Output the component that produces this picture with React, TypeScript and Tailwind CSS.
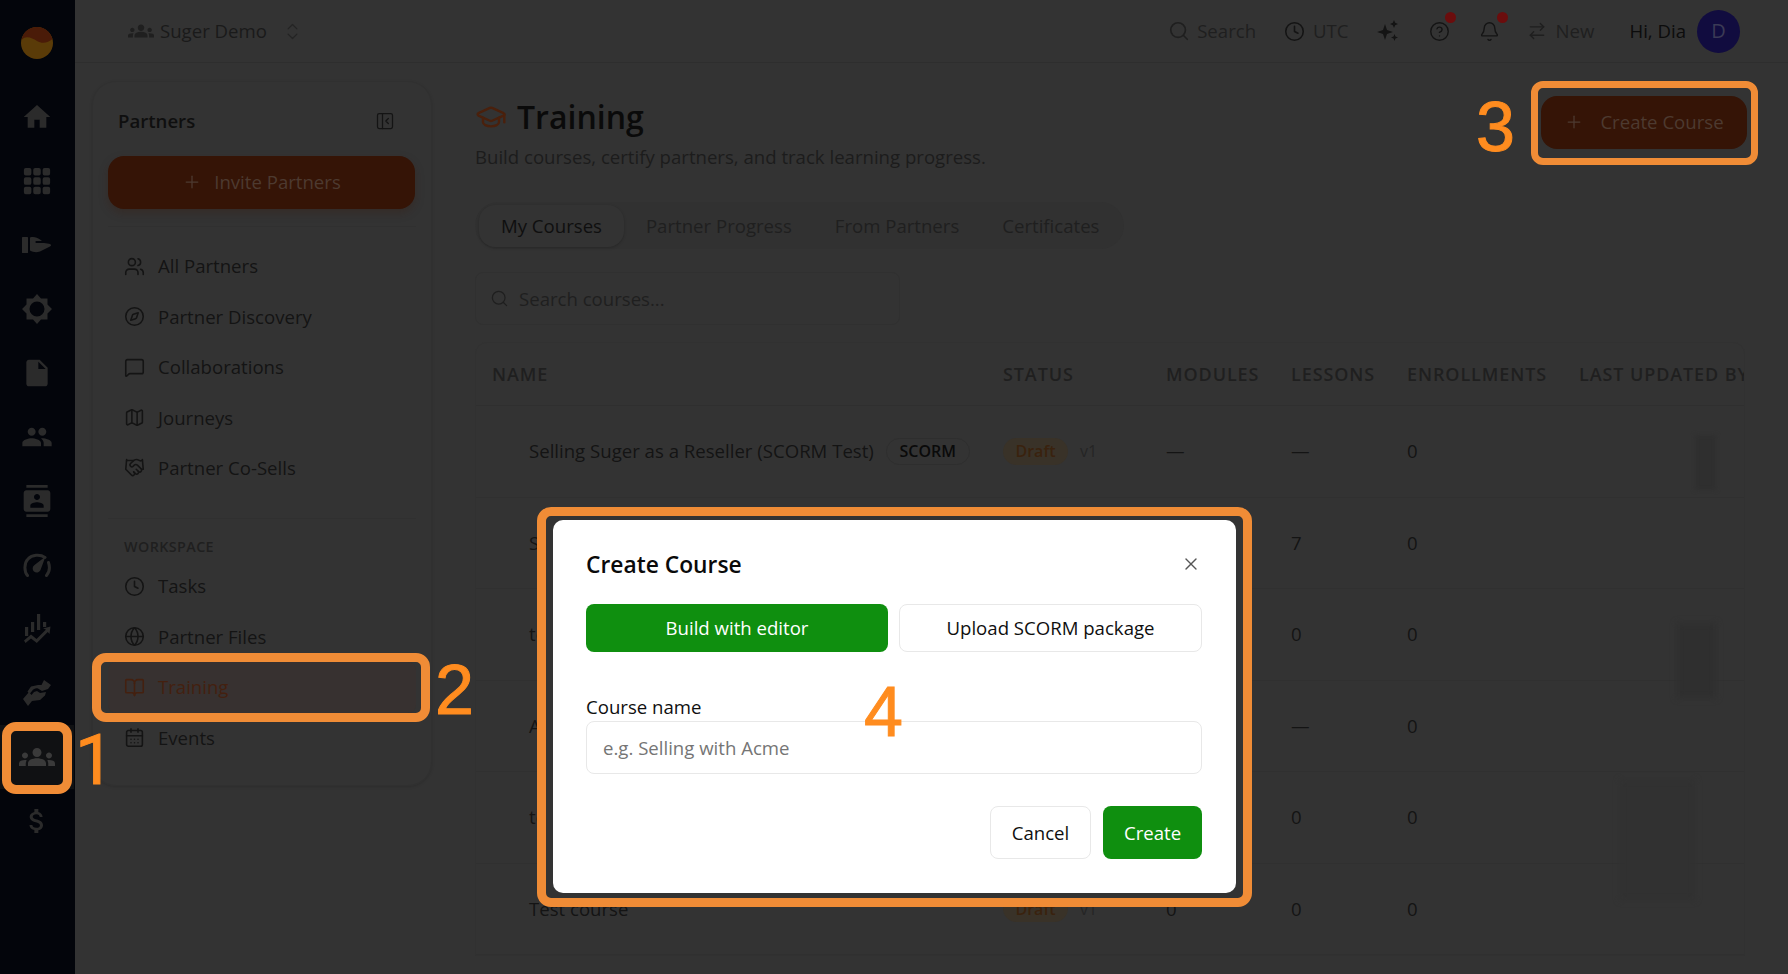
import React from "react";
import {
  Users, Compass, MessageSquare, Map as MapIcon, Handshake, Clock, Globe, BookOpen, CalendarDays,
  PanelLeftClose, GraduationCap, Search, CircleHelp, Bell, ArrowRightLeft, ChevronsUpDown, Plus, X,
} from "lucide-react";
import { MdHome, MdInsertDriveFile, MdPeople, MdContacts, MdGroups, MdAttachMoney } from "react-icons/md";
import { BsGrid3X3GapFill } from "react-icons/bs";

const HandIcon = () => (
  <svg width="30" height="18" viewBox="0 0 30 18" fill="currentColor">
    <rect x="0" y="1" width="6" height="16" rx="0.5" />
    <path d="M8 1.5C12 0.5 15 1.5 18 3.5L20 5H14.5C13 5 13 7 14.5 7H22L27 7.8C29.5 8.4 29.8 10 27.5 10.7L18 15.5C14 17 11 16 8 14.5Z" />
  </svg>
);

const GearIcon = () => (
  <svg width="30" height="30" viewBox="0 0 30 30" fill="currentColor">
    <path fillRule="evenodd" d="M15 0L19 4.5 25.5 4.5 25.5 10.5 30 15 25.5 19.5 25.5 25.5 19 25.5 15 30 11 25.5 4.5 25.5 4.5 19.5 0 15 4.5 10.5 4.5 4.5 11 4.5ZM15 7.5A7.5 7.5 0 1 0 15 22.5 7.5 7.5 0 1 0 15 7.5Z" />
  </svg>
);

const GaugeIcon = () => (
  <svg width="28" height="24" viewBox="0 0 28 24" fill="none">
    <path d="M4.5 22.5C1 18.5 1 10 5 6 9 1.8 17 1 22 4.5" stroke="currentColor" strokeWidth="3" strokeLinecap="round" />
    <path d="M23.5 22.5C26.5 19 27 14 25.5 9.5" stroke="currentColor" strokeWidth="3" strokeLinecap="round" />
    <path d="M22.5 3.5L17.5 17C16.5 19.5 13 20.5 11 18.5 9 16.5 9.5 13.5 11.5 12Z" fill="currentColor" />
  </svg>
);

const ChartIcon = () => (
  <svg width="28" height="30" viewBox="0 0 28 30" fill="currentColor">
    <rect x="2" y="13" width="3.2" height="9" />
    <rect x="8" y="8" width="3.2" height="10" />
    <rect x="14" y="0" width="3.2" height="16" />
    <rect x="20" y="8" width="3.2" height="5" />
    <path d="M1 26.5L8 20.5 13.5 25 23 15.5 20 14.5 27.5 12.5 26.5 20 24.8 18 13.8 29 8 24.5 2.5 29Z" />
  </svg>
);

const ShakeIcon = () => (
  <svg width="28" height="26" viewBox="0 0 28 26" fill="currentColor">
    <path d="M21 0L28 5 25 9 19 11 15 8.5C12.5 8 10.5 9 9 11L6.5 14 4.5 11.5 8 6.5 15 5 18.5 5Z" />
    <path d="M0 19L6 12 8.5 15 11 12 14 11 17 13 23 12 22 15.5 17 20 9 21 5 26Z" />
  </svg>
);

const SparkIcon = () => (
  <svg width="24" height="24" viewBox="0 0 24 24" fill="currentColor">
    <path d="M9 5L11 11 17 13 11 15 9 21 7 15 1 13 7 11Z" />
    <path d="M18 1L19.2 3.8 22 5 19.2 6.2 18 9 16.8 6.2 14 5 16.8 3.8Z" />
    <path d="M18.5 15L19.5 17.5 22 18.5 19.5 19.5 18.5 22 17.5 19.5 15 18.5 17.5 17.5Z" />
  </svg>
);

const railIcons: { I: any; s?: number }[] = [
  { I: MdHome, s: 32 },
  { I: BsGrid3X3GapFill, s: 30 },
  { I: HandIcon },
  { I: GearIcon },
  { I: MdInsertDriveFile, s: 32 },
  { I: MdPeople, s: 32 },
  { I: MdContacts, s: 32 },
  { I: GaugeIcon },
  { I: ChartIcon },
  { I: ShakeIcon },
  { I: MdGroups, s: 36 },
  { I: MdAttachMoney, s: 32 },
];

const mainNav = [
  { I: Users, t: "All Partners" },
  { I: Compass, t: "Partner Discovery" },
  { I: MessageSquare, t: "Collaborations" },
  { I: MapIcon, t: "Journeys" },
  { I: Handshake, t: "Partner Co-Sells" },
];
const workNav = [
  { I: Clock, t: "Tasks" },
  { I: Globe, t: "Partner Files" },
  { I: BookOpen, t: "Training", active: true },
  { I: CalendarDays, t: "Events" },
];

const rows = [
  { n: "Selling Suger as a Reseller (SCORM Test)", scorm: true, m: "—", l: "—", e: "0" },
  { n: "Selling Suger as a Reseller", m: "3", l: "7", e: "0" },
  { n: "test course", m: "0", l: "0", e: "0" },
  { n: "Aevo course", m: "—", l: "—", e: "0" },
  { n: "test", m: "0", l: "0", e: "0" },
  { n: "Test course", m: "0", l: "0", e: "0" },
];

const cols = "grid grid-cols-[511px_163px_125px_116px_172px_1fr] pl-[16px] items-center";

function NavItem({ I, t, active }: { I: any; t: string; active?: boolean }) {
  return (
    <div className={`h-[50.45px] flex items-center gap-[13px] pl-[16px] rounded-lg ${active ? "bg-[#373130] text-[#44200f]" : "text-[#141414]"}`}>
      <I size={21} strokeWidth={1.8} />
      <span className="text-[18.6px]">{t}</span>
    </div>
  );
}

export default function App() {
  return (
    <div className="relative w-[1788px] h-[974px] overflow-hidden flex bg-[#333333] font-['Open_Sans',sans-serif] text-[#141414]">
      {/* rail */}
      <aside className="w-[75px] shrink-0 bg-[#03050b] flex flex-col items-center pt-[27px] pr-[1px]">
        <svg width="32" height="32" viewBox="0 0 32 32" className="mb-[26px] shrink-0">
          <circle cx="16" cy="16" r="16" fill="#5a3b08" />
          <path d="M0.5 13C5 8 11 11 16 14 21 17 27 16 31.5 12 29 4 23 0 16 0 8 0 2 5 0.5 13Z" fill="#4a1b08" />
        </svg>
        {railIcons.map(({ I, s }, i) => (
          <div key={i} className={`h-[64px] w-full flex items-center justify-center ${i === 10 ? "bg-[#101113] text-[#3a3a3a]" : "text-[#2b2b2b]"}`}>
            {s ? <I size={s} /> : <I />}
          </div>
        ))}
      </aside>

      {/* right side */}
      <div className="flex-1 flex flex-col min-w-0">
        <header className="h-[63px] shrink-0 border-b border-[#2e2e2e] flex items-center pl-[53px] pr-[48px]">
          <MdGroups size={26} className="text-[#1f1f1f]" />
          <span className="ml-[6px] text-[18.6px] text-[#1a1a1a]">Suger Demo</span>
          <ChevronsUpDown size={21} strokeWidth={1.5} className="ml-[15px] text-[#242424]" />
          <div className="ml-auto flex items-center text-[18.6px] text-[#1f1f1f]">
            <Search size={22} strokeWidth={1.8} />
            <span className="ml-[7px]">Search</span>
            <Clock size={21} strokeWidth={1.8} className="ml-[28px] text-[#141414]" />
            <span className="ml-[8px]">UTC</span>
            <div className="ml-[27px] text-[#141414]"><SparkIcon /></div>
            <div className="relative ml-[29px]">
              <CircleHelp size={21} strokeWidth={1.6} className="text-[#141414]" />
              <span className="absolute -top-[9px] -right-[6px] w-[11px] h-[11px] rounded-full bg-[#6b0d0d]" />
            </div>
            <div className="relative ml-[29px]">
              <Bell size={21} strokeWidth={1.6} className="text-[#141414]" />
              <span className="absolute -top-[9px] -right-[8px] w-[11px] h-[11px] rounded-full bg-[#6b0d0d]" />
            </div>
            <ArrowRightLeft size={20} strokeWidth={1.7} className="ml-[27px]" />
            <span className="ml-[9px]">New</span>
            <span className="ml-[35px] text-[#0c0c0c]">Hi, Dia</span>
            <div className="ml-[11px] w-[43px] h-[43px] rounded-full bg-[#110c3f] text-[#3b3a55] flex items-center justify-center text-[20px]">D</div>
          </div>
        </header>

        <div className="flex flex-1 min-h-0">
          {/* partners panel */}
          <section className="ml-[17px] mt-[18px] w-[340px] h-[705px] shrink-0 rounded-[24px] border border-[#303030] px-[15px] shadow-[0_1px_3px_rgba(0,0,0,0.15)]">
            <div className="h-[26px] mt-[26px] flex items-center justify-between pl-[10px] pr-[21px]">
              <span className="text-[18.6px] font-semibold text-[#0f0f0f]">Partners</span>
              <PanelLeftClose size={20} strokeWidth={1.5} className="text-[#141414]" />
            </div>
            <button className="mt-[22px] w-[307px] h-[53px] pb-[2px] rounded-[16px] bg-[#351406] text-[#4d3a30] flex items-center justify-center gap-[12px] text-[18.6px] shadow-[0_4px_10px_rgba(60,20,0,0.25)]">
              <Plus size={20} strokeWidth={1.5} />
              Invite Partners
            </button>
            <div className="mt-[17px] border-t border-[#303030]" />
            <nav className="mt-[14px]">
              {mainNav.map((n) => <NavItem key={n.t} {...n} />)}
            </nav>
            <div className="mt-[25px] border-t border-[#303030]" />
            <div className="mt-[18px] h-[20px] pl-[16px] flex items-center text-[14.3px] font-semibold tracking-[0.03em] text-[#1f1f1f]">WORKSPACE</div>
            <nav className="mt-[4px]">
              {workNav.map((n) => <NavItem key={n.t} {...n} />)}
            </nav>
          </section>

          {/* content */}
          <main className="ml-[43px] w-[1272px] shrink-0">
            <div className="flex justify-between items-start pt-[32px]">
              <div>
                <div className="flex items-center h-[44px]">
                  <GraduationCap size={32} strokeWidth={1.8} className="text-[#4a200c]" />
                  <h1 className="ml-[10px] text-[32px] font-semibold text-[#0a0a0a] leading-[44px]">Training</h1>
                </div>
                <p className="mt-[5px] text-[18.6px] leading-[26px] text-[#1c1c1c]">Build courses, certify partners, and track learning progress.</p>
              </div>
              <button className="mt-[1px] w-[206px] h-[53px] pb-[1px] rounded-[16px] bg-[#351406] text-[#4d3a30] flex items-center justify-center gap-[16px] text-[18.6px]">
                <Plus size={20} strokeWidth={1.5} />
                Create Course
              </button>
            </div>

            <div className="mt-[32px] w-[649px] h-[47px] rounded-full bg-[#313131] flex items-center pl-[4px] text-[18.6px] text-[#1f1f1f]">
              <span className="h-[42px] px-[22px] rounded-[16px] bg-[#333333] shadow-[0_1px_3px_rgba(0,0,0,0.2)] flex items-center text-[#0f0f0f]">My Courses</span>
              <span className="px-[22px]">Partner Progress</span>
              <span className="px-[21px]">From Partners</span>
              <span className="px-[22px]">Certificates</span>
            </div>

            <div className="mt-[23px] w-[425px] h-[53px] rounded-lg border border-[#303030] flex items-center pl-[14px] gap-[10px] text-[18.6px] text-[#1f1f1f]">
              <Search size={19} strokeWidth={1.6} />
              <span>Search courses...</span>
            </div>

            <div className="mt-[17px] w-[1270px] rounded-t-xl border border-[#313131] overflow-hidden whitespace-nowrap">
              <div className={`${cols} h-[63px] border-b border-[#2f2f2f] text-[18px] font-semibold tracking-[0.05em] text-[#1f1f1f]`}>
                <span>NAME</span>
                <span>STATUS</span>
                <span>MODULES</span>
                <span>LESSONS</span>
                <span>ENROLLMENTS</span>
                <span>LAST UPDATED BY</span>
              </div>
              {rows.map((r) => (
                <div key={r.n} className={`${cols} h-[91.5px] border-b border-[#303030] text-[18.6px] text-[#141414]`}>
                  <div className="pl-[37px] flex items-center gap-[12px]">
                    <span>{r.n}</span>
                    {r.scorm && <span className="h-[27px] w-[84px] rounded-full border border-[#2e2e2e] flex items-center justify-center text-[16px] font-semibold text-[#0a0a0a]">SCORM</span>}
                  </div>
                  <div className="flex items-center gap-[12px]">
                    <span className="h-[27px] w-[65px] rounded-full bg-[#393228] text-[#3a220e] flex items-center justify-center text-[16px] font-semibold">Draft</span>
                    <span className="text-[16px] text-[#252525]">v1</span>
                  </div>
                  <span>{r.m}</span>
                  <span>{r.l}</span>
                  <span>{r.e}</span>
                  <span />
                </div>
              ))}
            </div>
          </main>
        </div>
      </div>

      {/* faint blurred redactions over the last column */}
      <div className="absolute left-[1695px] top-[435px] w-[21px] h-[55px] bg-[#2f2f2f] blur-[2px]" />
      <div className="absolute left-[1677px] top-[623px] w-[39px] h-[75px] bg-[#2f2f2f] blur-[3px]" />
      <div className="absolute left-[1620px] top-[780px] w-[75px] h-[120px] bg-[#313131] blur-[3px]" />

      {/* annotations */}
      <div className="absolute left-[2px] top-[722px] w-[70px] h-[72px] rounded-[14px] border-[9px] border-[#f08c36]" />
      <span className="absolute left-[75px] top-[720px] text-[70px] leading-[80px] text-[#ff8c1f] [-webkit-text-stroke:1px_#ff8c1f] font-['Roboto',sans-serif]">1</span>
      <div className="absolute left-[92px] top-[653px] w-[338px] h-[69px] rounded-[14px] border-[9px] border-[#f08c36]" />
      <span className="absolute left-[435px] top-[650px] text-[70px] leading-[80px] text-[#ff8c1f] [-webkit-text-stroke:1px_#ff8c1f] font-['Liberation_Sans',sans-serif]">2</span>
      <div className="absolute left-[1531px] top-[81px] w-[227px] h-[84px] rounded-[12px] border-[7px] border-[#f08c36]" />
      <span className="absolute left-[1476px] top-[87px] text-[70px] leading-[80px] text-[#ff8c1f] [-webkit-text-stroke:1px_#ff8c1f] font-['Liberation_Sans',sans-serif]">3</span>

      {/* modal */}
      <div className="absolute left-[537px] top-[507px] w-[715px] h-[400px] rounded-[14px] border-[9px] border-[#f08c36] bg-[#333333]">
        <div className="absolute left-[7px] top-[4px] w-[683px] h-[373px] rounded-[10px] bg-white pl-[33px] pr-[34px] text-[#0f0f0f]">
          <div className="h-[91px] flex items-center justify-between">
            <h2 className="text-[22.8px] font-semibold text-[#0a0a0a]">Create Course</h2>
            <X size={20} strokeWidth={1.6} className="text-[#555555] -mt-[4px] mr-[1px]" />
          </div>
          <div className="mt-[-7px] flex gap-[11px] text-[18.6px]">
            <button className="w-[302px] h-[48px] rounded-lg bg-[#0f8f0f] text-white">Build with editor</button>
            <button className="w-[303px] h-[48px] rounded-lg border border-[#e8e8e8] bg-white">Upload SCORM package</button>
          </div>
          <label className="block mt-[42px] text-[18.6px] leading-[26px]">Course name</label>
          <div className="mt-[1px] h-[53px] rounded-lg border border-[#e8e8e8] flex items-center pl-[16px] text-[18.6px] text-[#757575]">e.g. Selling with Acme</div>
          <div className="mt-[32px] flex justify-end gap-[12px] text-[18.6px]">
            <button className="w-[101px] h-[53px] rounded-lg border border-[#e8e8e8] bg-white">Cancel</button>
            <button className="w-[99px] h-[53px] rounded-lg bg-[#0f8f0f] text-white">Create</button>
          </div>
        </div>
      </div>
      <span className="absolute left-[864px] top-[672px] text-[70px] leading-[80px] text-[#ff8c1f] [-webkit-text-stroke:1px_#ff8c1f] font-['Liberation_Sans',sans-serif]">4</span>
    </div>
  );
}
